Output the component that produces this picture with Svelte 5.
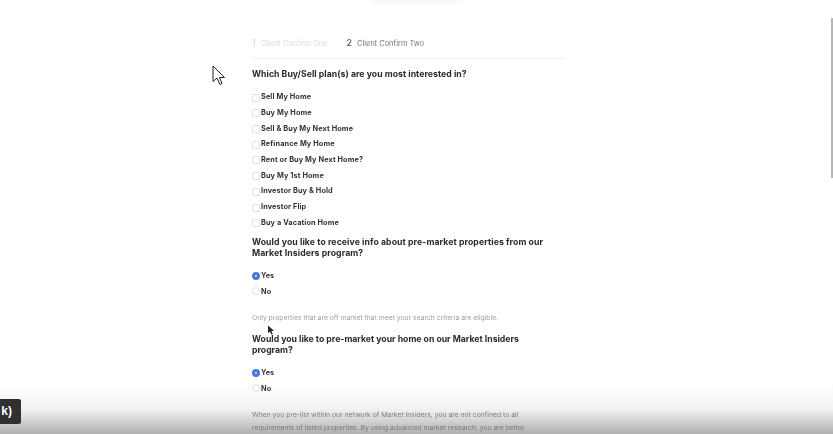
<script>
	const plans = [
		'Sell My Home', 'Buy My Home', 'Sell & Buy My Next Home', 'Refinance My Home',
		'Rent or Buy My Next Home?', 'Buy My 1st Home', 'Investor Buy & Hold', 'Investor Flip',
		'Buy a Vacation Home'
	];
</script>

<div class="page">
	<main class="form">
		<div class="steps">
			<span class="step done"><b>1</b> Client Confirm One</span>
			<span class="step"><b>2</b> Client Confirm Two</span>
		</div>

		<h2 class="first">Which Buy/Sell plan(s) are you most interested in?</h2>
		<div class="options">
			{#each plans as plan}
				<label class="opt"><span class="box"></span>{plan}</label>
			{/each}
		</div>

		<h2 class="second">Would you like to receive info about pre-market properties from our Market Insiders program?</h2>
		<div class="options radios">
			<label class="opt"><span class="radio on"></span>Yes</label>
			<label class="opt"><span class="radio"></span>No</label>
		</div>
		<p class="note">Only properties that are off market that meet your search criteria are eligible.</p>

		<h2 class="third">Would you like to pre-market your home on our Market Insiders program?</h2>
		<div class="options radios">
			<label class="opt"><span class="radio on"></span>Yes</label>
			<label class="opt"><span class="radio"></span>No</label>
		</div>
		<p class="body">When you pre-list within our network of Market Insiders, you are not confined to all requirements of listed properties. By using advanced market research, you are better</p>
	</main>

	<div class="top-smudge"></div>
	<div class="shade"></div>
	<div class="scroll"></div>
	<div class="tip">k)</div>

	<svg class="cursor big" width="14" height="21" viewBox="0 0 14 21">
		<path d="M1 1 L1 16.5 L5 13 L8 19.5 L10 18.5 L7.5 12.5 L12.5 12.5 Z" fill="#fff" stroke="#222" stroke-width="1" stroke-linejoin="round"/>
	</svg>
	<svg class="cursor small" width="8" height="11" viewBox="0 0 8 11">
		<path d="M1 0.5 L1 8 L3 6.4 L4.4 9.5 L5.8 8.9 L4.4 6 L7 5.8 Z" fill="#222"/>
	</svg>
</div>

<style>
	:global(body) { margin: 0; background: #fff; }

	.page {
		position: relative;
		width: 833px;
		height: 434px;
		overflow: hidden;
		background: #fff;
		font-family: Inter, "Open Sans", sans-serif;
		color: #333;
	}

	.form {
		width: 313px;
		margin-left: 252px;
		padding-top: 37px;
		filter: blur(0.6px);
	}

	.steps {
		display: flex;
		gap: 19px;
		height: 21px;
		border-bottom: 1px solid #f3f3f3;
		font-size: 7.4px;
		line-height: 11px;
		color: #777;
	}
	.step b { font-weight: 500; font-size: 9px; margin-right: 3px; color: #555; }
	.step.done { color: #ddd; }
	.step.done b { color: #ddd; }

	h2 {
		margin: 0;
		font-size: 8.7px;
		line-height: 11.2px;
		font-weight: 700;
		color: #2b2b2b;
		letter-spacing: 0.09px;
	}
	.first { margin-top: 10px; letter-spacing: 0.04px; }
	.second { margin-top: 9px; }
	.third { margin-top: 11px; width: 285px; letter-spacing: 0; }

	.options {
		display: flex;
		flex-direction: column;
		gap: 4.7px;
		margin-top: 12px;
	}
	.first + .options { margin-top: 11px; }
	.radios { margin-top: 11px; }

	.opt {
		display: flex;
		align-items: center;
		height: 11px;
		font-size: 7.3px;
		font-weight: 700;
		color: #333;
		letter-spacing: 0.12px;
	}

	.box, .radio {
		flex: none;
		width: 6px;
		height: 6px;
		margin-right: 1px;
		position: relative;
		top: 1px;
		border: 1px solid #e2e2e2;
		border-radius: 2px;
		background: #fff;
	}
	.radio { top: 0; border-radius: 50%; }
	.radio.on {
		border: 3px solid #4a78d8;
		width: 2px;
		height: 2px;
		background: #dfe8fb;
	}

	.note {
		margin: 15px 0 0;
		font-size: 6.8px;
		line-height: 11px;
		color: #a0a0a0;
		white-space: nowrap;
	}

	.body {
		margin: 14px 0 0;
		font-size: 6.8px;
		line-height: 13px;
		color: #808080;
		width: 300px;
	}

	.top-smudge {
		position: absolute;
		left: 372px;
		top: -3px;
		width: 86px;
		height: 5px;
		background: #f7f5f5;
		filter: blur(2px);
	}

	.shade {
		position: absolute;
		left: 0;
		right: 0;
		bottom: 0;
		height: 50px;
		background: linear-gradient(to bottom, rgba(130, 130, 130, 0), rgba(130, 130, 130, 0.1) 50%, rgba(110, 110, 110, 0.55));
	}

	.scroll {
		position: absolute;
		right: 0;
		top: 18px;
		width: 2px;
		height: 160px;
		background: #b5b5b5;
	}

	.tip {
		position: absolute;
		left: 0;
		top: 399px;
		width: 21px;
		height: 25px;
		box-sizing: border-box;
		text-align: right;
		padding-right: 9px;
		background: #303030;
		border-radius: 0 2px 2px 0;
		color: #fff;
		font: 700 12px/25px "Liberation Sans", sans-serif;
	}

	.cursor { position: absolute; }
	.big { left: 212px; top: 65px; }
	.small { left: 267px; top: 325px; filter: blur(0.4px); }
</style>
